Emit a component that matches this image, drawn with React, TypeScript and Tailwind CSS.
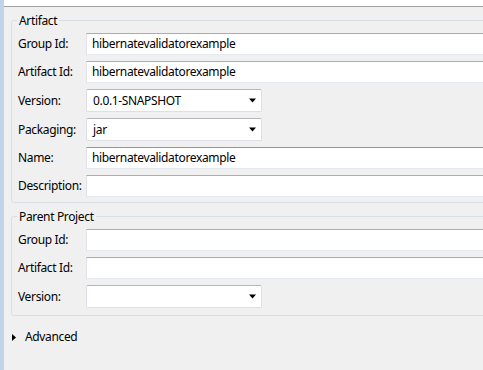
import React from "react";

const font = { fontFamily: '"Noto Sans", "Open Sans", Arial, sans-serif' };

function TextField({ value, focused }: { value?: string; focused?: boolean }) {
  return (
    <div
      className={
        "flex-1 h-[22px] bg-white border border-l-[#e2e3ea] border-r-[#dbdfe6] border-b-[#e3e9ef] flex items-center pl-[5px] text-[12px] tracking-[-0.35px] text-black whitespace-nowrap overflow-hidden " +
        (focused ? "border-t-[#7a9bbd]" : "border-t-[#abadb3]")
      }
    >
      {value}
    </div>
  );
}

function Combo({ value }: { value?: string }) {
  return (
    <div className="w-[176px] h-[23px] bg-white border border-[#dcdfe4] border-t-[#b4b6bc] rounded-[2px] flex items-center pl-[6px] pr-[4px] text-[12px] tracking-[-0.35px] text-black">
      <span className="flex-1">{value}</span>
      <svg width="8" height="5" viewBox="0 0 8 5">
        <polygon points="0,0.5 7,0.5 3.5,4.5" fill="#000" />
      </svg>
    </div>
  );
}

function Row({ label, children }: { label: string; children: React.ReactNode }) {
  return (
    <div className="flex items-center">
      <div className="w-[68px] shrink-0 text-[12px] tracking-[-0.35px] text-black whitespace-nowrap">{label}</div>
      {children}
    </div>
  );
}

function Group({ title, children, pb }: { title: string; children: React.ReactNode; pb: string }) {
  return (
    <div className={"relative border border-[#d5dfe5] rounded-[3px] mr-[-12px] pt-[12px] pl-[6px] " + pb}>
      <span className="absolute left-[5px] top-[-8px] px-[2px] bg-[#f0f0f0] text-[12px] tracking-[-0.35px] leading-[16px] text-black">
        {title}
      </span>
      <div className="flex flex-col gap-[6px]">{children}</div>
    </div>
  );
}

export default function App() {
  return (
    <div className="w-[483px] h-[370px] overflow-hidden flex bg-[#f0f0f0]" style={font}>
      <div className="w-[4px] shrink-0 bg-[#bfd3ea]" />
      <div className="flex-1 flex flex-col min-w-0">
        <div className="h-[6px] bg-white" />
        <div className="h-px bg-[#a0a0a0]" />
        <div className="pl-[7px] pt-[13px] flex flex-col">
          <Group title="Artifact" pb="pb-[5px]">
            <Row label="Group Id:">
              <TextField value="hibernatevalidatorexample" />
            </Row>
            <Row label="Artifact Id:">
              <TextField value="hibernatevalidatorexample" />
            </Row>
            <Row label="Version:">
              <Combo value="0.0.1-SNAPSHOT" />
            </Row>
            <Row label="Packaging:">
              <Combo value="jar" />
            </Row>
            <Row label="Name:">
              <TextField value="hibernatevalidatorexample" focused />
            </Row>
            <Row label="Description:">
              <TextField />
            </Row>
          </Group>
          <div className="mt-[13px]">
            <Group title="Parent Project" pb="pb-[7px]">
              <Row label="Group Id:">
                <TextField />
              </Row>
              <Row label="Artifact Id:">
                <TextField />
              </Row>
              <Row label="Version:">
                <Combo />
              </Row>
            </Group>
          </div>
          <div className="flex items-center mt-[13px] pl-[1px] h-[16px]">
            <svg width="4" height="7" viewBox="0 0 4 7" className="mr-[9px]">
              <polygon points="0,0 4,3.5 0,7" fill="#000" />
            </svg>
            <span className="text-[12px] tracking-[-0.35px] text-black">Advanced</span>
          </div>
        </div>
      </div>
    </div>
  );
}
